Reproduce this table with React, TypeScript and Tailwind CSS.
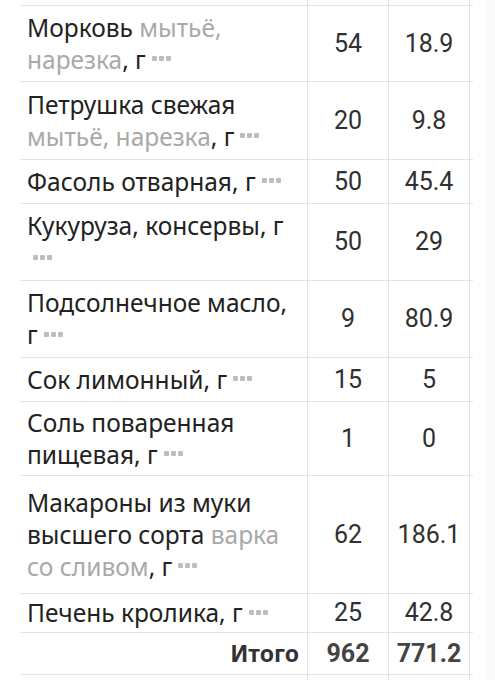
import React from "react";

const Dots = () => (
  <span className="inline-flex items-center gap-[2px] ml-[6px] align-middle -translate-y-[3px]">
    <span className="w-[5px] h-[5px] rounded-[1px] bg-[#bdbdbd]" />
    <span className="w-[5px] h-[5px] rounded-[1px] bg-[#bdbdbd]" />
    <span className="w-[5px] h-[5px] rounded-[1px] bg-[#bdbdbd]" />
  </span>
);

const G = ({ children }: { children: React.ReactNode }) => (
  <span className="text-[#a9a9a9]">{children}</span>
);

type Row = { h: number; lines: React.ReactNode[]; a: string; b: string };

const rows: Row[] = [
  { h: 76, lines: [<>Морковь <G>мытьё,</G></>, <><G>нарезка</G>, г<Dots /></>], a: "54", b: "18.9" },
  { h: 78, lines: [<>Петрушка свежая</>, <><G>мытьё, нарезка</G>, г<Dots /></>], a: "20", b: "9.8" },
  { h: 44, lines: [<>Фасоль отварная, г<Dots /></>], a: "50", b: "45.4" },
  { h: 77, lines: [<>Кукуруза, консервы, г</>, <><Dots /></>], a: "50", b: "29" },
  { h: 77, lines: [<>Подсолнечное масло,</>, <>г<Dots /></>], a: "9", b: "80.9" },
  { h: 44, lines: [<>Сок лимонный, г<Dots /></>], a: "15", b: "5" },
  { h: 74, lines: [<>Соль поваренная</>, <>пищевая, г<Dots /></>], a: "1", b: "0" },
  { h: 118, lines: [<>Макароны из муки</>, <>высшего сорта <G>варка</G></>, <><G>со сливом</G>, г<Dots /></>], a: "62", b: "186.1" },
  { h: 39, lines: [<>Печень кролика, г<Dots /></>], a: "25", b: "42.8" },
];

const nameFont = { fontFamily: "'Noto Sans', sans-serif" };
const numFont = { fontFamily: "Roboto, sans-serif" };

export default function App() {
  return (
    <div className="w-[495px] h-[680px] bg-white overflow-hidden relative">
      <div className="absolute right-0 top-0 w-[8px] h-full bg-[#f9f9f9]" />
      <div className="ml-[20px] w-[453px] grid grid-cols-[287px_81px_82px_3px] text-[#222222]">
        <div className="h-[6px] border-b border-[#e3e3e3]" />
        <div className="h-[6px] border-b border-l border-[#e3e3e3]" />
        <div className="h-[6px] border-b border-l border-r border-[#e3e3e3]" />
        <div className="h-[6px] border-b border-[#e3e3e3]" />
        {rows.map((r, i) => (
          <React.Fragment key={i}>
            <div
              className="border-b border-[#e3e3e3] pl-[7px] flex flex-col justify-center text-[24.5px] leading-[32px] whitespace-nowrap"
              style={{ height: r.h, ...nameFont }}
            >
              {r.lines.map((l, j) => (
                <div key={j}>{l}</div>
              ))}
            </div>
            <div
              className="border-b border-l border-[#e3e3e3] flex items-center justify-center text-[25px] text-[#303030]"
              style={{ height: r.h, ...numFont }}
            >
              {r.a}
            </div>
            <div
              className="border-b border-l border-r border-[#e3e3e3] flex items-center justify-center text-[25px] text-[#303030]"
              style={{ height: r.h, ...numFont }}
            >
              {r.b}
            </div>
            <div className="border-b border-[#e3e3e3]" style={{ height: r.h }} />
          </React.Fragment>
        ))}
        <div
          className="h-[42px] border-b border-[#e3e3e3] flex items-center justify-end pr-[8px] text-[23px] font-bold text-[#333333]"
          style={nameFont}
        >
          Итого
        </div>
        <div
          className="h-[42px] border-b border-l border-[#e3e3e3] flex items-center justify-center text-[25px] font-bold text-[#444444]"
          style={numFont}
        >
          962
        </div>
        <div
          className="h-[42px] border-b border-l border-r border-[#e3e3e3] flex items-center justify-center text-[25px] font-bold text-[#444444]"
          style={numFont}
        >
          771.2
        </div>
        <div className="h-[42px] border-b border-[#e3e3e3]" />
        <div className="h-[10px]" />
        <div className="h-[10px] border-l border-[#e3e3e3]" />
        <div className="h-[10px] border-l border-r border-[#e3e3e3]" />
        <div className="h-[10px]" />
      </div>
    </div>
  );
}
